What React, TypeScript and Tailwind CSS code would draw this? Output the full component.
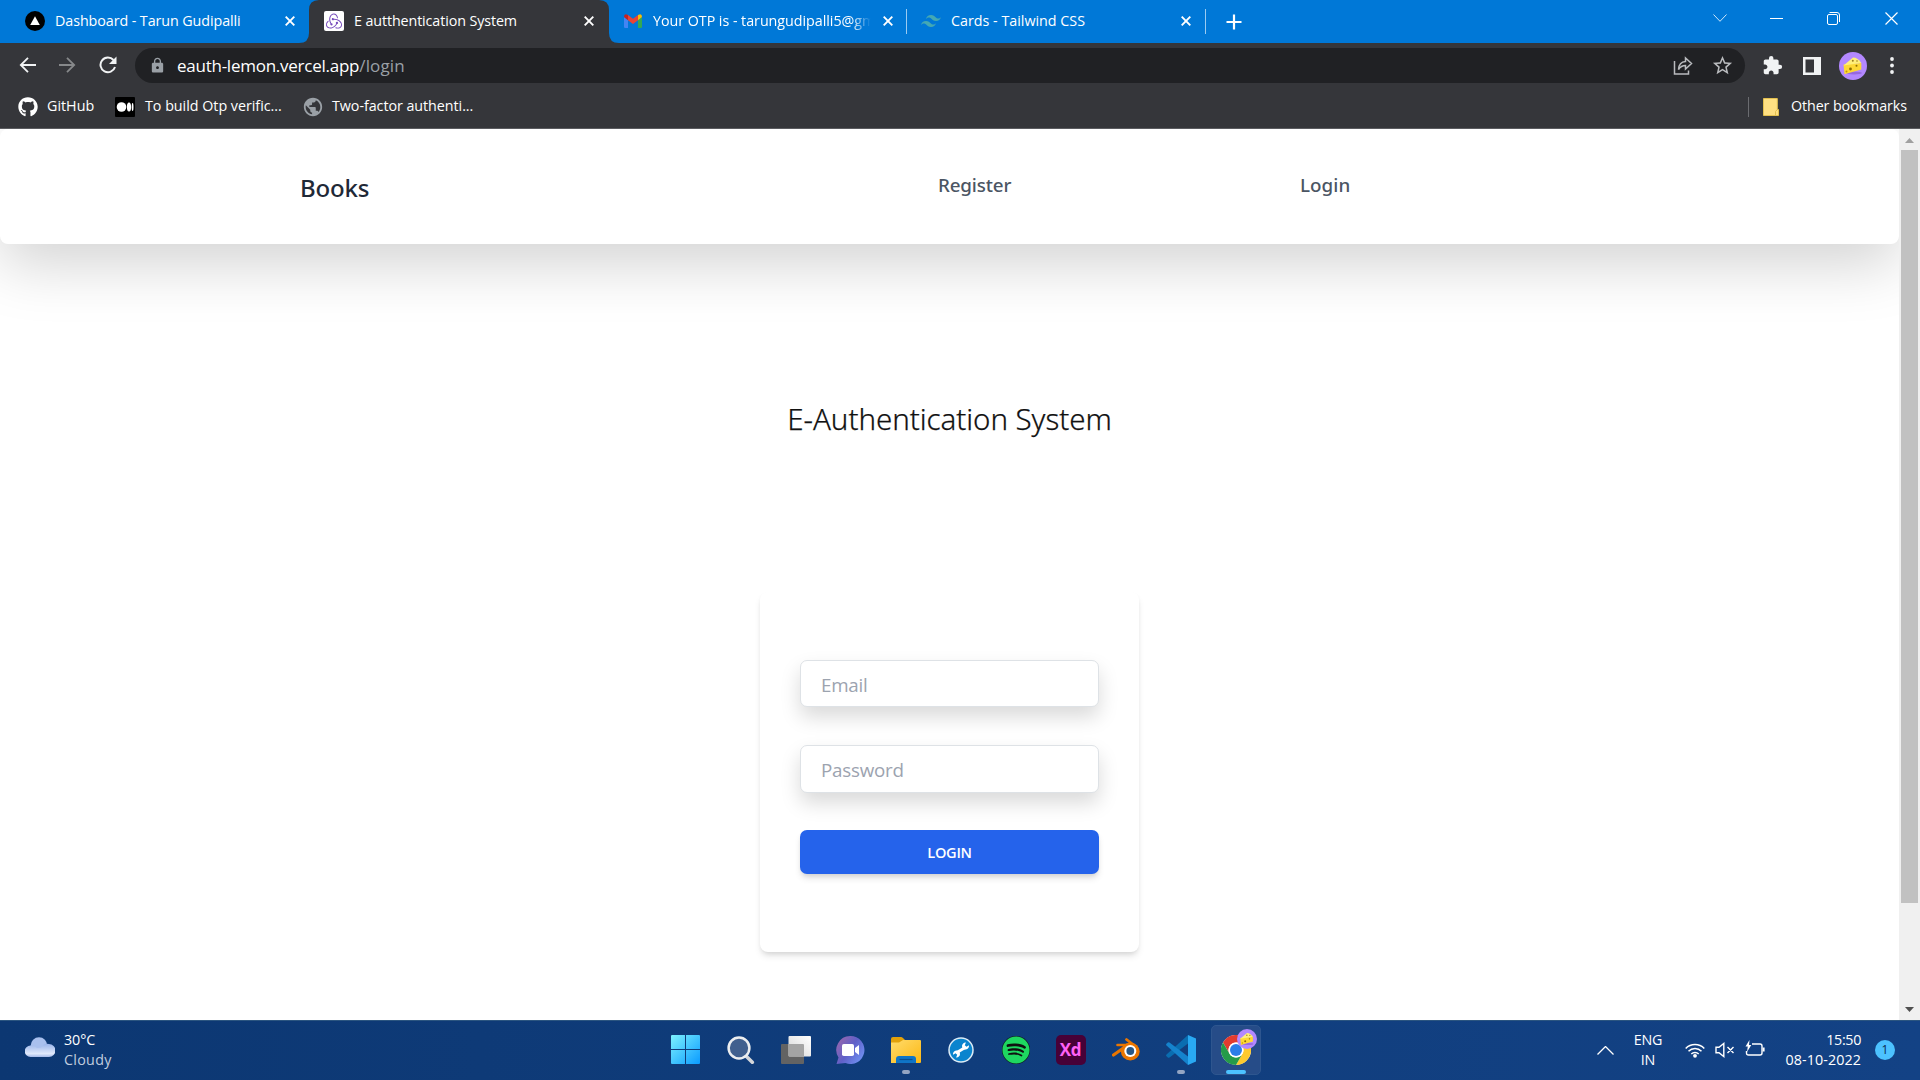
import React from "react";
import { FaGithub, FaSpotify } from "react-icons/fa6";
import { SiRedux, SiTailwindcss } from "react-icons/si";
import { MdExtension, MdLock, MdPublic, MdStarBorder } from "react-icons/md";

function VercelIcon() {
  return (
    <svg viewBox="0 0 20 20" className="h-5 w-5">
      <circle cx="10" cy="10" r="10" fill="#000" />
      <path d="M10 5.3 14.8 14H5.2z" fill="#fff" />
    </svg>
  );
}

function GmailIcon() {
  return (
    <svg viewBox="0 0 18 14" className="ml-px h-3.5 w-[18px]">
      <path d="M0 3v9.8Q0 14 1.2 14H4V6z" fill="#4285f4" />
      <path d="M18 3v9.8q0 1.2-1.2 1.2H14V6z" fill="#34a853" />
      <path d="M4 6.3V1l5 3.8L14 1v5.3L9 10z" fill="#ea4335" />
      <path d="M14 1q4-2.2 4 2l-4 3.3z" fill="#fbbc04" />
      <path d="M4 1Q0-1.200 0 3l4 3.300z" fill="#c5221f" />
    </svg>
  );
}

function Cheese({ className }: { className: string }) {
  return (
    <svg viewBox="0 0 28 28" className={className}>
      <circle cx="14" cy="14" r="14" fill="#b388ff" />
      <ellipse cx="15" cy="21" rx="8" ry="1.500" fill="#9668e0" />
      <path d="M4.500 12.500 22.300 11V17.500L5.500 22.300z" fill="#fdd835" />
      <path d="M4.500 13.500 14 5.500q5 0 8.300 5.500z" fill="#fff07a" />
      <circle cx="11.500" cy="17" r="1.400" fill="#8d6e00" />
      <circle cx="17.500" cy="13.800" r="1" fill="#8d6e00" />
      <circle cx="13.800" cy="8.800" r="1" fill="#a08020" />
      <circle cx="18" cy="9" r=".8" fill="#a08020" />
      <circle cx="7.500" cy="19.500" r="1" fill="#c79a00" />
    </svg>
  );
}

function CloseX() {
  return (
    <svg viewBox="0 0 10 10" className="h-2.5 w-2.5" stroke="#fff" strokeWidth="1.9">
      <path d="M.7.7l8.600 8.600M9.300.7.7 9.300" />
    </svg>
  );
}

function Tab({ icon, label, className = "", textClass = "tracking-[-0.08px]" }: { icon: React.ReactNode; label: string; className?: string; textClass?: string }) {
  return (
    <div className={`flex h-[43px] w-[299px] shrink-0 items-center pb-px pl-[15px] ${className}`}>
      <div className="flex w-[30px] items-center">{icon}</div>
      <div className={`mr-[10px] w-[220px] whitespace-nowrap text-[14.3px] ${textClass}`}>{label}</div>
      <CloseX />
    </div>
  );
}

function TabStrip() {
  return (
    <div className="flex h-[43px] items-center bg-[#0078d7] pl-2.5 text-white">
      <Tab icon={<VercelIcon />} label="Dashboard - Tarun Gudipalli" />
      <div className="relative">
        <svg viewBox="0 0 320 43" className="absolute -left-[10px] top-0 h-[43px] w-[320px]" fill="#35363a">
          <path d="M0 43q10 0 10-10V10Q10 0 20 0H300q10 0 10 10V33q0 10 10 10z" />
        </svg>
        <Tab
          className="relative"
          textClass="tracking-[-0.11px]"
          icon={
            <span className="flex h-5 w-5 items-center justify-center rounded-[2px] bg-white">
              <SiRedux className="h-4 w-4 text-[#764abc]" />
            </span>
          }
          label="E autthentication System"
        />
      </div>
      <Tab icon={<GmailIcon />} label="Your OTP is - tarungudipalli5@gm" textClass="tracking-[-0.04px] [mask-image:linear-gradient(to_right,#000_90%,transparent_99%)]" />
      <div className="-ml-px h-[25px] w-px bg-[#9bcbf1]" />
      <Tab className="-ml-px" icon={<SiTailwindcss className="h-5 w-5 text-[#44a8b3]" />} label="Cards - Tailwind CSS" textClass="tracking-[0px]" />
      <div className="h-[25px] w-px bg-[#9bcbf1]" />
      <svg viewBox="0 0 16 16" className="ml-[20px] h-4 w-4" stroke="#fff" strokeWidth="2.200">
        <path d="M8 .5v15M.5 8h15" />
      </svg>
      <div className="mb-[7px] ml-auto flex items-center">
        <svg viewBox="0 0 14 8" className="mr-[43px] h-2 w-3.5" fill="none" stroke="#cfe6f8">
          <path d="M.5.5 7 7.300 13.500.5" />
        </svg>
        <div className="mr-[44px] h-px w-[13px] bg-white" />
        <svg viewBox="0 0 13 13" className="mr-[45px] h-[13px] w-[13px]" fill="none" stroke="#fff">
          <rect x=".5" y="2.500" width="10" height="10" rx="1.500" />
          <path d="M2.500.5H10q2.500 0 2.500 2.500v7" />
        </svg>
        <svg viewBox="0 0 13 13" className="mr-[22px] h-[13px] w-[13px]" stroke="#fff" strokeWidth="1.200">
          <path d="M.5.5l12 12M12.500.5l-12 12" />
        </svg>
      </div>
    </div>
  );
}

function Toolbar() {
  return (
    <div className="flex h-[45px] items-center bg-[#35363a] pl-[19px]">
      <svg viewBox="0 0 17 16" className="mb-px h-4 w-[17px]" fill="none" stroke="#f1f3f4" strokeWidth="1.800">
        <path d="M17 8H2M9 .8 1.800 8 9 15.200" />
      </svg>
      <svg viewBox="0 0 17 16" className="mb-px ml-[23px] h-4 w-[17px]" fill="none" stroke="#86888a" strokeWidth="1.800">
        <path d="M0 8h15M8 .8 15.200 8 8 15.200" />
      </svg>
      <svg viewBox="0 0 18 18" className="mb-px ml-[23px] h-[18px] w-[18px]" fill="none" stroke="#f1f3f4" strokeWidth="2">
        <path d="M14.500 4A7.400 7.400 0 1 0 16 11" />
        <path d="M17.500.5V8H10z" fill="#f1f3f4" stroke="none" />
      </svg>
      <div className="ml-[18px] flex h-[35px] w-[1610px] items-center rounded-full bg-[#202124] pl-[14px] pr-[11px]">
        <MdLock className="h-[17px] w-[17px] text-[#9aa0a6]" />
        <div className="ml-[11px] whitespace-nowrap text-[17px] leading-none tracking-[-0.25px] text-white">
          eauth-lemon.vercel.app<span className="tracking-[0.15px] text-[#9aa0a6]">/login</span>
        </div>
        <svg viewBox="0 0 20 20" className="ml-auto h-5 w-5" fill="none" stroke="#b9bbbe" strokeWidth="1.500">
          <path d="M1.500 5v13H15.500v-3.500" />
          <path d="M5.500 13.500Q6 6 12.500 5.500V2L18.500 7.500l-6 5.500V9.500Q8 9.500 5.500 13.500z" />
        </svg>
        <MdStarBorder className="ml-[18px] h-[23px] w-[23px] text-[#b9bbbe]" />
      </div>
      <MdExtension className="ml-[17px] h-[21px] w-[21px] text-[#f1f3f4]" />
      <svg viewBox="0 0 18 18" className="ml-[20px] h-[18px] w-[18px]">
        <path fillRule="evenodd" d="M0 0h18v18H0zM2.500 2.500v13H11V2.500z" fill="#f1f3f4" />
      </svg>
      <Cheese className="ml-[18px] h-7 w-7" />
      <svg viewBox="0 0 4 17" className="ml-[23px] h-[17px] w-1" fill="#f1f3f4">
        <circle cx="2" cy="2" r="1.900" />
        <circle cx="2" cy="8.500" r="1.900" />
        <circle cx="2" cy="15" r="1.900" />
      </svg>
    </div>
  );
}

function Bookmarks() {
  return (
    <div className="flex h-[41px] items-center whitespace-nowrap border-b border-[#5b5c60] bg-[#35363a] pb-1 pl-[18px] text-[14.3px] text-white">
      <FaGithub className="mt-px h-5 w-5" />
      <span className="ml-[9px] w-[68px] tracking-[0px]">GitHub</span>
      <svg viewBox="0 0 20 20" className="mt-px h-5 w-5" fill="#fff">
        <rect width="20" height="20" rx="1" fill="#000" />
        <circle cx="6.500" cy="10" r="4.800" />
        <ellipse cx="14" cy="10" rx="2.100" ry="4.500" />
        <ellipse cx="17.600" cy="10" rx=".9" ry="4" />
      </svg>
      <span className="ml-[10px] w-[157px] tracking-[-0.02px]">To build Otp verific...</span>
      <MdPublic className="mt-px h-[22px] w-[22px] text-[#9aa0a6]" />
      <span className="ml-[8px] tracking-[-0.05px]">Two-factor authenti...</span>
      <div className="ml-auto mt-px h-5 w-px bg-[#6b6c70]" />
      <svg viewBox="0 0 16 18" className="ml-[14px] mt-px h-[18px] w-4">
        <path d="M.5.5h13.800v11h1.200v6H.5z" fill="#ffe082" stroke="#e3c04f" />
        <path d="M12.500 17.500v-4l1.800-2" fill="none" stroke="#e3c04f" />
      </svg>
      <span className="ml-3 mr-[13px] w-[116px] tracking-[-0.1px]">Other bookmarks</span>
    </div>
  );
}

const inputClass =
  "w-full rounded-[7px] border border-[#dee2e6] bg-white px-5 pt-0.5 text-[18.8px] tracking-[-0.25px] shadow-[0_10px_20px_rgba(0,0,0,0.15)] outline-none placeholder:text-[#9ca3af]";

function Page() {
  return (
    <main className="flex min-h-0 flex-1">
      <div className="flex flex-1 flex-col items-center overflow-hidden bg-white">
        <nav className="flex h-[115px] w-full shrink-0 rounded-[8px] bg-white pl-[300px] font-['Noto_Sans'] font-medium shadow-[0_20px_60px_rgba(0,0,0,0.175)]">
          <div className="w-[638px] pt-[43px] text-[24px] leading-[32px] tracking-[-0.2px] text-[#1f2937]">Books</div>
          <div className="w-[362px] pt-[42px] text-[18.800px] leading-[28px] tracking-[-0.15px] text-[#4b5563]">Register</div>
          <div className="pt-[42px] text-[18.800px] leading-[28px] tracking-[0.05px] text-[#4b5563]">Login</div>
        </nav>
        <h1 className="mt-[153px] font-['Noto_Sans'] text-[29.500px] font-light leading-[44px] tracking-[-0.05px] text-[#111] [-webkit-text-stroke:0.25px_#111]">E-Authentication System</h1>
        <form className="mt-[151px] h-[360px] w-[379px] shrink-0 rounded-[8px] bg-white px-10 pt-[68px] shadow-[0_5px_7.500px_-1.200px_rgba(0,0,0,0.1),0_2.500px_5px_-2px_rgba(0,0,0,0.1)]">
          <input className={`h-[47px] ${inputClass}`} placeholder="Email" />
          <input className={`mt-[38px] h-12 ${inputClass}`} placeholder="Password" />
          <button
            type="button"
            className="mt-[37px] flex h-11 w-full items-center justify-center rounded-[7px] bg-[#2563eb] pt-px text-[14.600px] font-semibold tracking-[-0.3px] text-white shadow-[0_5px_7.500px_-1.200px_rgba(0,0,0,0.12),0_2.500px_5px_-2px_rgba(0,0,0,0.1)]"
          >
            LOGIN
          </button>
        </form>
      </div>
      <div className="flex w-[21px] flex-col items-center bg-[#f0f0f0] pt-[9px]">
        <div className="h-[5px] w-[9px] bg-[#a0a0a0] [clip-path:polygon(50%_0,100%_100%,0_100%)]" />
        <div className="mt-[7px] h-[753px] w-[17px] bg-[#c1c1c1]" />
        <div className="mt-[104px] h-[5px] w-[9px] bg-[#505050] [clip-path:polygon(0_0,100%_0,50%_100%)]" />
      </div>
    </main>
  );
}

function WindowsIcon() {
  return (
    <svg viewBox="0 0 29 29" className="h-[29px] w-[29px]">
      <defs>
        <linearGradient id="win" x1="0" y1="0" x2="29" y2="29" gradientUnits="userSpaceOnUse">
          <stop stopColor="#7df2fe" />
          <stop offset="1" stopColor="#0a9bff" />
        </linearGradient>
      </defs>
      <path d="M0 1q0-1 1-1h13v14H0zM15 0h13q1 0 1 1v13H15zM0 15h14v14H1q-1 0-1-1zM15 15h14v13q0 1-1 1H15z" fill="url(#win)" />
    </svg>
  );
}

function SearchIcon() {
  return (
    <svg viewBox="0 0 28 28" className="h-7 w-7">
      <path d="M18.500 19.500 25.300 26.300" stroke="#d4d6da" strokeWidth="3.600" strokeLinecap="round" />
      <circle cx="12" cy="12" r="10.400" fill="#41608e" stroke="#eceef0" strokeWidth="2.500" />
    </svg>
  );
}

function TaskViewIcon() {
  return (
    <svg viewBox="0 0 30 28" className="h-7 w-[30px]">
      <defs>
        <linearGradient id="tv" x1="0" y1="1" x2="1" y2="0">
          <stop stopColor="#d6d6d6" />
          <stop offset="1" stopColor="#fff" />
        </linearGradient>
      </defs>
      <rect y="8" width="23" height="20" rx="1" fill="#636363" />
      <rect x="7.500" y="0" width="22.500" height="20.500" rx="1" fill="url(#tv)" />
      <path d="M7.500 8H22q1 0 1 1v11.500H8.500q-1 0-1-1z" fill="#a4a4a4" />
    </svg>
  );
}

function ChatIcon() {
  return (
    <svg viewBox="0 0 29 28" className="h-7 w-[29px]">
      <defs>
        <linearGradient id="chat" x1="0" y1="0" x2="1" y2=".7">
          <stop stopColor="#a268a8" />
          <stop offset=".55" stopColor="#6060c8" />
          <stop offset="1" stopColor="#6f8ff0" />
        </linearGradient>
      </defs>
      <path d="M14.500 0a14 14 0 1 1-5 27.100L.5 28l2-6.500A14 14 0 0 1 14.500 0z" fill="url(#chat)" />
      <rect x="6" y="8" width="12" height="12" rx="1.800" fill="#fff" />
      <path d="M19 12l4-3v10l-4-3z" fill="#fff" />
    </svg>
  );
}

function FolderIcon() {
  return (
    <svg viewBox="0 0 30 28" className="h-7 w-[30px]">
      <defs>
        <linearGradient id="fold" x1="0" y1="0" x2="1" y2="1">
          <stop stopColor="#ffdb6b" />
          <stop offset="1" stopColor="#fcb813" />
        </linearGradient>
      </defs>
      <path d="M0 3q0-2 2-2h8q1 0 2 1l3 3v6H0z" fill="#e2a10a" />
      <path d="M0 6.500h8L12 4h17q1 0 1 1v21q0 1-1 1H0z" fill="url(#fold)" />
      <path d="M5 27v-4q0-3 3-3h14q3 0 3 3v4z" fill="#0f75c7" />
      <path d="M8.500 23.500h13" stroke="#0a4f91" strokeWidth="1.200" />
    </svg>
  );
}

function WrenchIcon() {
  return (
    <svg viewBox="0 0 26 26" className="h-[26px] w-[26px]">
      <circle cx="13" cy="13" r="12" fill="#0a84ce" stroke="#dcebf5" strokeWidth="1.500" />
      <path d="M8.500 15.800 17.500 10.200" stroke="#fff" strokeWidth="2.800" />
      <path d="M20.900 8.300a3.500 3.500 0 1 1-3-2.700L16.800 8.300l1.700 1.500zM5.100 17.700a3.500 3.500 0 1 1 3 2.700L9.200 17.700l-1.700-1.500z" fill="#fff" />
    </svg>
  );
}

function BlenderIcon() {
  return (
    <svg viewBox="0 0 28 23" className="h-[23px] w-7">
      <path d="M1.500 17 15 7.500" stroke="#ea7600" strokeWidth="3.200" strokeLinecap="round" />
      <path d="M5.500 7H19" stroke="#ea7600" strokeWidth="2.600" strokeLinecap="round" />
      <path d="M14.500 1.500 23 8" stroke="#ea7600" strokeWidth="2.800" strokeLinecap="round" />
      <ellipse cx="18.300" cy="13.500" rx="9.400" ry="9" fill="#ea7600" />
      <circle cx="18.300" cy="13" r="6" fill="#fff" />
      <circle cx="18.300" cy="13" r="3.900" fill="#265787" />
    </svg>
  );
}

function VsCodeIcon() {
  return (
    <svg viewBox="0 0 30 30" className="h-[30px] w-[30px]">
      <path d="M22 0v8.500L3.500 22.500Q2.500 23 1.800 22.400L.5 21.200q-.8-.8 0-1.700z" fill="#0a6db0" />
      <path d="M22 30v-8.500L3.500 7.500Q2.500 7 1.800 7.600L.5 8.800q-.8.800 0 1.700z" fill="#1583cd" />
      <path d="M22 0 30 3.500v23L22 30z" fill="#29a9f2" />
    </svg>
  );
}

function ChromeIcon() {
  return (
    <svg viewBox="0 0 48 48" className="h-[30px] w-[30px]">
      <circle cx="24" cy="24" r="24" fill="#fff" />
      <path d="M24 12h20.800A24 24 0 0 0 3.200 12L13.600 30A12 12 0 0 1 24 12z" fill="#e33b2e" />
      <path d="M34.400 30 24 48A24 24 0 0 0 44.800 12H24a12 12 0 0 1 10.400 18z" fill="#fdc92e" />
      <path d="M13.600 30 3.200 12A24 24 0 0 0 24 48l10.400-18a12 12 0 0 1-20.800 0z" fill="#259b49" />
      <circle cx="24" cy="24" r="12" fill="#fff" />
      <circle cx="24" cy="24" r="9.600" fill="#2b7de9" />
    </svg>
  );
}

function TaskItem({ children, indicator }: { children: React.ReactNode; indicator?: "open" | "active" }) {
  return (
    <div className="flex w-[55px] justify-center">
      <div className={`relative flex h-[50px] w-[50px] items-center justify-center rounded-[5px] pb-px ${indicator === "active" ? "border border-[#2e568f] bg-[#264c88]" : ""}`}>
        {children}
        {indicator === "open" && <span className="absolute bottom-px left-[21px] h-1 w-2 rounded-full bg-[#93a5c3]" />}
        {indicator === "active" && <span className="absolute bottom-0 left-[14px] h-1 w-5 rounded-full bg-[#4cc2ff]" />}
      </div>
    </div>
  );
}

function Taskbar() {
  return (
    <footer className="grid h-[60px] shrink-0 grid-cols-[658px_605px_1fr] items-center border-t border-[#2b5580] bg-linear-to-r from-[#0c3772] via-[#103d7c] via-50% to-[#134285] pb-px text-[14.300px] leading-5 text-white">
      <div className="flex items-center pl-[25px]">
        <svg viewBox="0 0 30 20" className="mt-[-6px] h-5 w-[30px]">
          <defs>
            <linearGradient id="cl" x1="0" y1="0" x2="0" y2="1">
              <stop stopColor="#98b3ea" />
              <stop offset=".75" stopColor="#e0e9fb" />
              <stop offset="1" stopColor="#a5baea" />
            </linearGradient>
          </defs>
          <circle cx="14" cy="8.500" r="8.300" fill="#a9c0ee" />
          <path d="M5.500 20a5.500 5.500 0 0 1 0-11.500Q9 7.500 12 11l4-.5Q19 5.500 24 7a6.500 6.500 0 0 1 0 13z" fill="url(#cl)" />
        </svg>
        <div className="ml-[9px]">
          <div className="tracking-[-0.1px]">30°C</div>
          <div className="tracking-[0.3px] text-[#c0cddf]">Cloudy</div>
        </div>
      </div>
      <div className="flex h-[50px] items-center">
        <TaskItem><WindowsIcon /></TaskItem>
        <TaskItem><SearchIcon /></TaskItem>
        <TaskItem><TaskViewIcon /></TaskItem>
        <TaskItem><ChatIcon /></TaskItem>
        <TaskItem indicator="open"><FolderIcon /></TaskItem>
        <TaskItem><WrenchIcon /></TaskItem>
        <TaskItem>
          <span className="flex rounded-full bg-[#101010]"><FaSpotify className="h-7 w-7 text-[#1ed760]" /></span>
        </TaskItem>
        <TaskItem>
          <div className="flex h-[30px] w-[30px] items-center justify-center rounded-[5px] bg-[#470137] pb-px text-[17px] font-bold leading-none tracking-[-0.3px] text-[#ff61f6]">Xd</div>
        </TaskItem>
        <TaskItem><BlenderIcon /></TaskItem>
        <TaskItem indicator="open"><VsCodeIcon /></TaskItem>
        <TaskItem indicator="active">
          <ChromeIcon />
          <Cheese className="absolute right-[3px] top-[3px] h-5 w-5" />
        </TaskItem>
      </div>
      <div className="flex items-center justify-end pr-[25px]">
        <svg viewBox="0 0 17 9" className="h-[9px] w-[17px]" fill="none" stroke="#fff" strokeWidth="1.300">
          <path d="M.5 8.500l8-8 8 8" />
        </svg>
        <div className="ml-[19px] w-[30px] text-center tracking-[-0.2px]">ENG<br />IN</div>
        <svg viewBox="0 0 20 16" className="ml-[22px] h-4 w-5" fill="none" stroke="#fff" strokeWidth="1.500">
          <path d="M.7 6.500a13 13 0 0 1 18.600 0M3.500 9.300a9 9 0 0 1 13 0M6.300 12a5.300 5.300 0 0 1 7.400 0" />
          <circle cx="10" cy="13.800" r="1.900" fill="#fff" stroke="none" />
        </svg>
        <svg viewBox="0 0 20 16" className="ml-[10px] h-4 w-5" fill="none" stroke="#fff" strokeWidth="1.400">
          <path d="M1 5.300h3L8.800 1.500v13L4 10.700H1zM12.500 5l6 6M18.500 5l-6 6" />
        </svg>
        <svg viewBox="0 0 20 17" className="mb-[3px] ml-[10px] h-[17px] w-5" fill="none" stroke="#fff" strokeWidth="1.400">
          <path d="M7 4h8q2 0 2 2v7q0 2-2 2H3.500q-2 0-2-2V11" />
          <path d="M18.600 7.500v4" strokeWidth="2" />
          <path d="M4.500 0 .5 6.500h2.300L2 12l4.300-7H4z" fill="#fff" stroke="none" />
        </svg>
        <div className="ml-[19px] w-[77px] text-right">
          <div className="tracking-[-0.35px]">15:50</div>
          <div className="tracking-[0.08px]">08-10-2022</div>
        </div>
        <div className="ml-[14px] flex h-5 w-5 items-center justify-center rounded-full bg-[#4cc2ff] text-[12px] leading-none text-[#0b2d4d]">1</div>
      </div>
    </footer>
  );
}

export default function App() {
  return (
    <div className="flex h-[1080px] w-[1920px] flex-col overflow-hidden bg-white font-['Open_Sans','Noto_Sans',sans-serif]">
      <TabStrip />
      <Toolbar />
      <Bookmarks />
      <Page />
      <Taskbar />
    </div>
  );
}
